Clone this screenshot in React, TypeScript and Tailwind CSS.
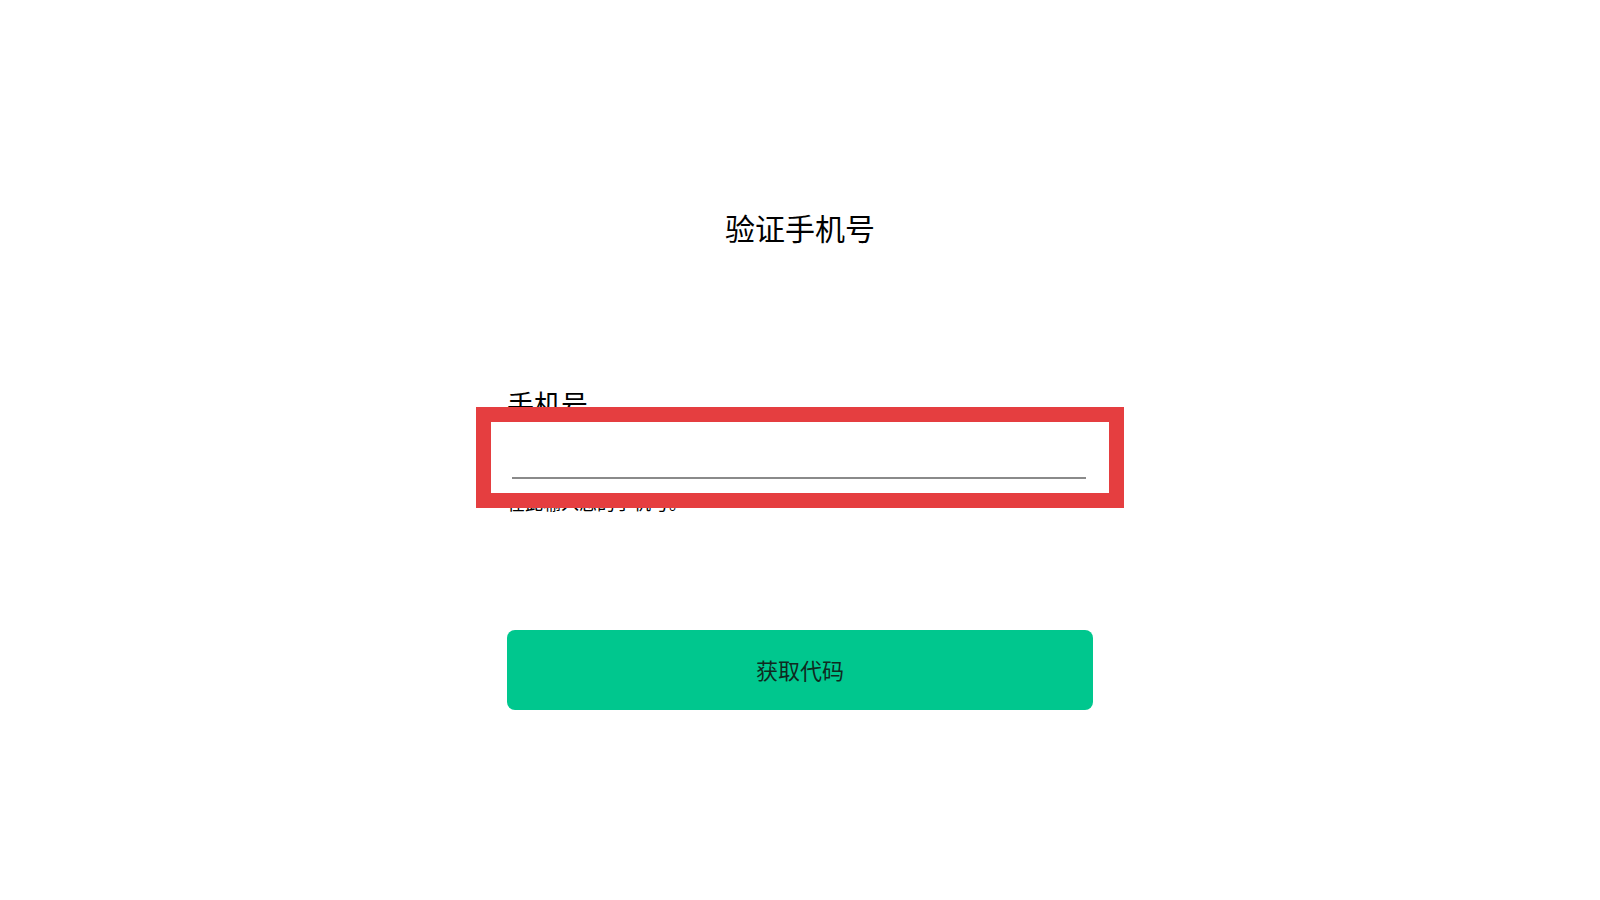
import React from "react";

const font = { fontFamily: '"Noto Sans", "Noto Sans CJK SC", sans-serif' };

const App: React.FC = () => {
    return (
        <div className="min-h-screen w-full bg-white flex flex-col items-center text-black" style={font}>
            <h1 className="pt-[211px] text-[30px] leading-[36px] font-normal">验证手机号</h1>

            <div className="w-[586px] mt-[142px] flex flex-col">
                <label className="text-[27px] leading-[32px]">手机号</label>
                <div className="relative">
                    <input
                        type="tel"
                        className="mx-[5px] w-[574px] h-[58px] border-b-2 border-[#8a8a8a] bg-transparent outline-none text-[22px]"
                    />
                    {/* highlight around the field */}
                    <div className="absolute -top-[14px] -bottom-[29px] -left-[31px] -right-[31px] border-[15px] border-[#e53e40] z-10 pointer-events-none" />
                </div>
                <p className="mt-[12px] text-[18px] leading-[24px]">在此输入您的手机号。</p>

                <button className="mt-[115px] h-[80px] w-full rounded-lg bg-[#00c78e] text-[22px] text-[#0f2a1f]">
                    获取代码
                </button>
            </div>
        </div>
    );
};

export default App;
